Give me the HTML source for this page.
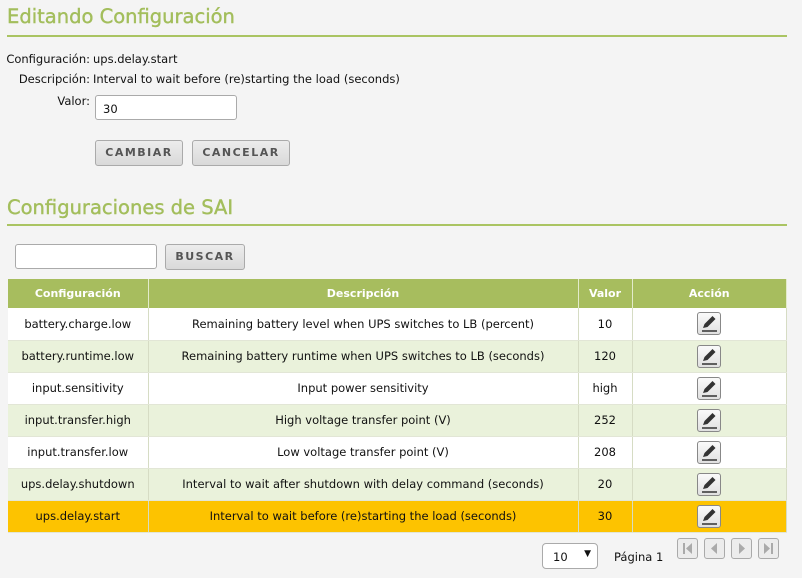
<!DOCTYPE html>
<html><head><meta charset="utf-8"><style>
*{box-sizing:border-box}
body{margin:0;width:802px;height:578px;background:#f4f4f4;font-family:"DejaVu Sans",Verdana,sans-serif;font-size:11.5px;color:#111;position:relative;overflow:hidden}
.h{position:absolute;left:7px;color:#a3be5c;font-size:19.5px;font-weight:normal;-webkit-text-stroke:0.4px #a3be5c}
.hr{position:absolute;left:7px;width:780px;height:2px;background:#aac462}
.lbl{position:absolute;text-align:right;width:90px}
.abs{position:absolute}
.inp{position:absolute;background:#fff;border:1px solid #aaa;border-radius:3px}
.btn{position:absolute;background:linear-gradient(#ececec,#d9d9d9);border:1px solid #aaa;border-radius:3px;font-weight:bold;color:#555;letter-spacing:1.5px;font-size:11px;text-align:center;line-height:24px}
table{position:absolute;left:8px;top:279px;width:779px;border-collapse:collapse;table-layout:fixed}
th{background:#a7bd5e;color:#fff;height:29px;font-size:11px;border-right:1px solid #e3ebcb}
td{height:32px;text-align:center;border-right:1px solid #d6dcc4;border-bottom:1px solid #e2e6d6}
tr.a td{background:#fff}tr.b td{background:#eaf2db}tr.s td{background:#fdc300}
.ed{display:inline-block;width:24px;height:23px;border:1px solid #888;border-radius:3px;background:linear-gradient(#fafafa,#e0e0e0);vertical-align:middle}
.pg{position:absolute;top:538px;width:21px;height:21px;border:1px solid #aaa;border-radius:3px;background:#ececec}
</style></head><body>
<div class="h" style="top:5px">Editando Configuración</div>
<div class="hr" style="top:35px"></div>
<div class="lbl" style="left:0;top:52px">Configuración:</div><div class="abs" style="left:93px;top:52px">ups.delay.start</div>
<div class="lbl" style="left:0;top:72px">Descripción:</div><div class="abs" style="left:93px;top:72px">Interval to wait before (re)starting the load (seconds)</div>
<div class="lbl" style="left:0;top:94px">Valor:</div>
<div class="inp" style="left:95px;top:95px;width:142px;height:25px;padding:6px 0 0 7px">30</div>
<div class="btn" style="left:95px;top:140px;width:88px;height:26px">CAMBIAR</div>
<div class="btn" style="left:192px;top:140px;width:98px;height:26px">CANCELAR</div>
<div class="h" style="top:196px">Configuraciones de SAI</div>
<div class="hr" style="top:224px"></div>
<div class="inp" style="left:15px;top:244px;width:142px;height:25px"></div>
<div class="btn" style="left:165px;top:244px;width:80px;height:26px">BUSCAR</div>
<table>
<colgroup><col style="width:140px"><col style="width:430px"><col style="width:54px"><col></colgroup>
<tr><th>Configuración</th><th>Descripción</th><th>Valor</th><th>Acción</th></tr>
<tr class="a"><td>battery.charge.low</td><td>Remaining battery level when UPS switches to LB (percent)</td><td>10</td><td><span class="ed"><svg width="22" height="21" viewBox="0 0 22 21"><path d="M5 15l1.5-4 8-8 3 3-8 8z" fill="#333"/><path d="M4 18h15" stroke="#333" stroke-width="1.5"/></svg></span></td></tr>
<tr class="b"><td>battery.runtime.low</td><td>Remaining battery runtime when UPS switches to LB (seconds)</td><td>120</td><td><span class="ed"><svg width="22" height="21" viewBox="0 0 22 21"><path d="M5 15l1.5-4 8-8 3 3-8 8z" fill="#333"/><path d="M4 18h15" stroke="#333" stroke-width="1.5"/></svg></span></td></tr>
<tr class="a"><td>input.sensitivity</td><td>Input power sensitivity</td><td>high</td><td><span class="ed"><svg width="22" height="21" viewBox="0 0 22 21"><path d="M5 15l1.5-4 8-8 3 3-8 8z" fill="#333"/><path d="M4 18h15" stroke="#333" stroke-width="1.5"/></svg></span></td></tr>
<tr class="b"><td>input.transfer.high</td><td>High voltage transfer point (V)</td><td>252</td><td><span class="ed"><svg width="22" height="21" viewBox="0 0 22 21"><path d="M5 15l1.5-4 8-8 3 3-8 8z" fill="#333"/><path d="M4 18h15" stroke="#333" stroke-width="1.5"/></svg></span></td></tr>
<tr class="a"><td>input.transfer.low</td><td>Low voltage transfer point (V)</td><td>208</td><td><span class="ed"><svg width="22" height="21" viewBox="0 0 22 21"><path d="M5 15l1.5-4 8-8 3 3-8 8z" fill="#333"/><path d="M4 18h15" stroke="#333" stroke-width="1.5"/></svg></span></td></tr>
<tr class="b"><td>ups.delay.shutdown</td><td>Interval to wait after shutdown with delay command (seconds)</td><td>20</td><td><span class="ed"><svg width="22" height="21" viewBox="0 0 22 21"><path d="M5 15l1.5-4 8-8 3 3-8 8z" fill="#333"/><path d="M4 18h15" stroke="#333" stroke-width="1.5"/></svg></span></td></tr>
<tr class="s"><td>ups.delay.start</td><td>Interval to wait before (re)starting the load (seconds)</td><td>30</td><td><span class="ed"><svg width="22" height="21" viewBox="0 0 22 21"><path d="M5 15l1.5-4 8-8 3 3-8 8z" fill="#333"/><path d="M4 18h15" stroke="#333" stroke-width="1.5"/></svg></span></td></tr>
</table>
<div class="inp" style="left:542px;top:543px;width:56px;height:26px;border-radius:4px;padding:6px 0 0 10px">10<span style="position:absolute;right:6px;top:5px;font-size:9px">▼</span></div>
<div class="abs" style="left:614px;top:550px">Página 1</div>
<div class="pg" style="left:677px"><svg width="19" height="19"><rect x="5" y="4" width="2" height="11" fill="#aaa"/><path d="M14 4v11l-6-5.5z" fill="#aaa"/></svg></div>
<div class="pg" style="left:704px"><svg width="19" height="19"><path d="M12 4v11l-6-5.5z" fill="#aaa"/></svg></div>
<div class="pg" style="left:731px"><svg width="19" height="19"><path d="M7 4v11l6-5.5z" fill="#aaa"/></svg></div>
<div class="pg" style="left:758px"><svg width="19" height="19"><rect x="12" y="4" width="2" height="11" fill="#aaa"/><path d="M5 4v11l6-5.5z" fill="#aaa"/></svg></div>
</body></html>
